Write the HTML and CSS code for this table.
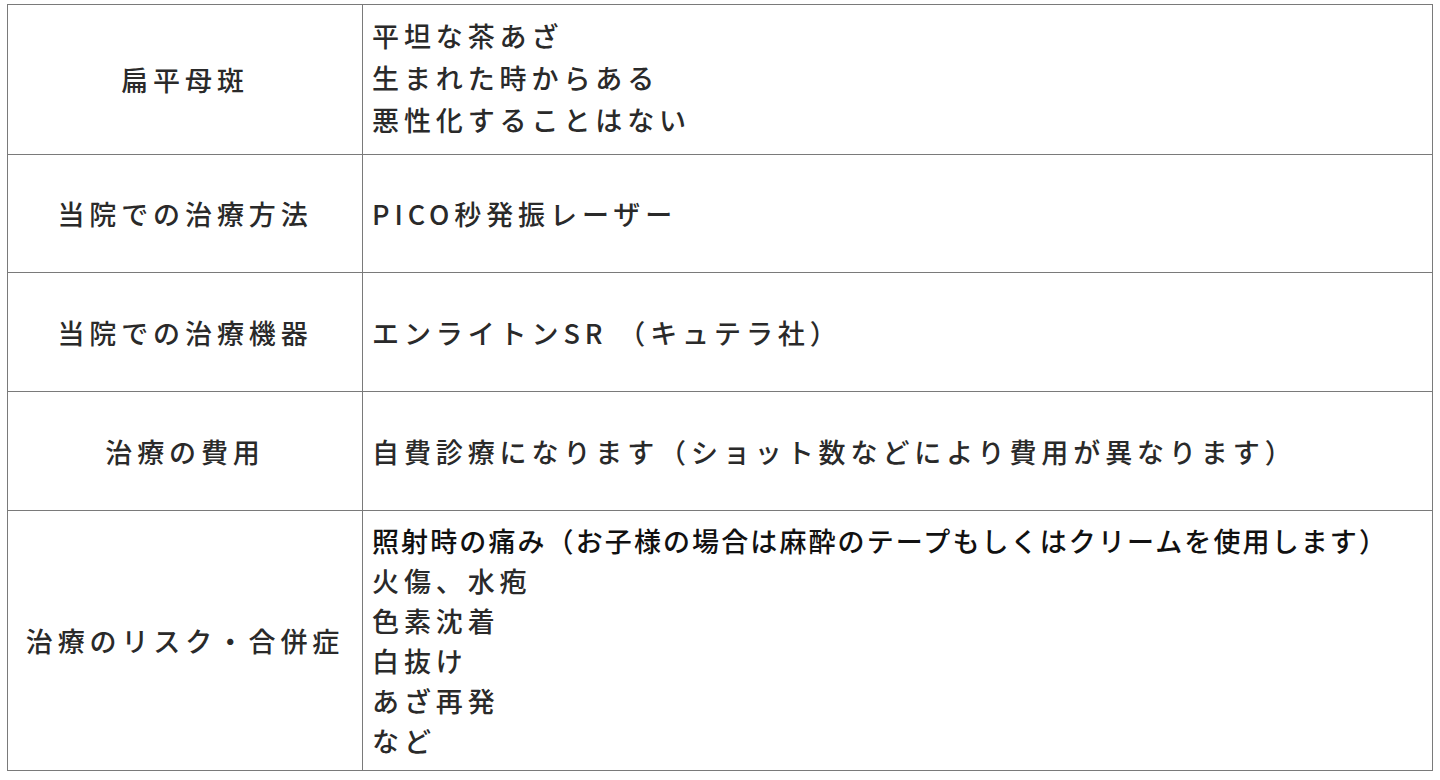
FILE: index.html
```html
<!DOCTYPE html>
<html lang="ja">
<head>
<meta charset="utf-8">
<link rel="stylesheet" href="styles.css">
</head>
<body>
<table class="info">
  <tr class="r1">
    <th>扁平母斑</th>
    <td><div>平坦な茶あざ</div><div>生まれた時からある</div><div>悪性化することはない</div></td>
  </tr>
  <tr class="r2">
    <th>当院での治療方法</th>
    <td>PICO秒発振レーザー</td>
  </tr>
  <tr class="r3">
    <th>当院での治療機器</th>
    <td>エンライトンSR （キュテラ社）</td>
  </tr>
  <tr class="r4">
    <th>治療の費用</th>
    <td>自費診療になります（ショット数などにより費用が異なります）</td>
  </tr>
  <tr class="r5">
    <th>治療のリスク・合併症</th>
    <td><div class="tight">照射時の痛み（お子様の場合は麻酔のテープもしくはクリームを使用します）</div><div>火傷、水疱</div><div>色素沈着</div><div>白抜け</div><div>あざ再発</div><div>など</div></td>
  </tr>
</table>
</body>
</html>
```

FILE: styles.css
```css
html, body {
  margin: 0;
  padding: 0;
  background: #fff;
}
body {
  padding: 4px 0 0 7px;
  font-family: "Noto Sans CJK JP", "Noto Sans", sans-serif;
  color: #2a2a2a;
}
.info {
  border-collapse: collapse;
  width: 1426px;
  table-layout: fixed;
}
.info th,
.info td {
  border: 1px solid #7a7a7a;
  vertical-align: middle;
  font-size: 27px;
  letter-spacing: 4.9px;
  font-weight: 500;
  padding: 0;
}
.info th {
  width: 354px;
  text-align: center;
}
.info td {
  text-align: left;
  padding-left: 9px;
}
.r1 { height: 150px; }
.r1 td { line-height: 42px; padding-bottom: 4px; }
.r2 { height: 118px; }
.r3 { height: 119px; }
.r4 { height: 119px; }
.r5 { height: 260px; }
.r5 td { line-height: 40px; }
.r3 th, .r3 td { border-top-color: #b5b5b5; }
.tight {
  letter-spacing: 2.1px;
  color: #111;
}
```
